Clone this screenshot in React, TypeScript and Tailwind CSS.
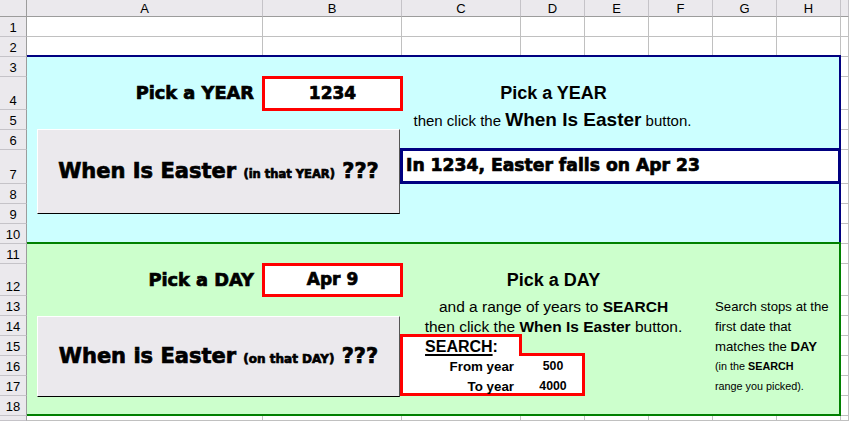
import React from "react";

const heavy = "font-['DejaVu_Sans',sans-serif] font-bold [-webkit-text-stroke:0.7px_#000]";
const reg = "font-['Liberation_Sans',Arial,sans-serif]";
const tpl =
  "grid grid-cols-[27px_236px_139px_119px_64px_64px_64px_64px_64px_1fr] grid-rows-[17px_20px_20px_20px_33px_20px_20px_34px_20px_20px_20px_20px_32px_20px_20px_20px_20px_20px_20px_1fr]";

const letters = ["A", "B", "C", "D", "E", "F", "G", "H", ""];

function Background() {
  const cells: React.ReactNode[] = [];
  cells.push(
    <div key="corner" className="bg-[#ebe9ed] border-r border-b border-[#9c9c9c]" />
  );
  letters.forEach((l, i) =>
    cells.push(
      <div
        key={"h" + i}
        className="bg-[#ebe9ed] border-r border-r-[#c5c3c8] border-b border-b-[#9c9c9c] flex items-center justify-center pt-[1px] text-[13px] leading-none text-black overflow-hidden"
      >
        {l}
      </div>
    )
  );
  for (let r = 1; r <= 19; r++) {
    cells.push(
      <div
        key={"r" + r}
        className="bg-[#ebe9ed] border-r border-r-[#9c9c9c] border-b border-b-[#c5c3c8] flex items-end justify-center pb-[2px] text-[13px] leading-none text-black overflow-hidden"
      >
        {r < 19 ? r : ""}
      </div>
    );
    for (let c = 0; c < 9; c++)
      cells.push(<div key={r + "-" + c} className="bg-white border-r border-b border-[#c0c0c0]" />);
  }
  return <div className={`${tpl} [grid-area:1/1] ${reg}`}>{cells}</div>;
}

function Overlay() {
  return (
    <div className={`${tpl} [grid-area:1/1] ${reg} text-black`}>
      {/* regions */}
      <div className="col-start-2 col-end-10 row-start-4 row-end-12 -mt-[2px] bg-[#ccffff] border-t-2 border-r-2 border-[#000080]" />
      <div className="col-start-2 col-end-10 row-start-12 row-end-20 -mt-[2px] bg-[#ccffcc] border-t-2 border-r-2 border-b-2 border-[#008000]" />

      {/* YEAR section */}
      <div className="col-start-2 row-start-5 flex items-center justify-end pr-[9px]">
        <span className={`${heavy} text-[17.8px] whitespace-nowrap`}>Pick a YEAR</span>
      </div>
      <div className="col-start-3 row-start-5 -m-[1px] bg-white border-[3px] border-[#ff0000] flex items-center justify-center">
        <span className={`${heavy} text-[17px]`}>1234</span>
      </div>
      <div className="col-start-4 col-end-8 row-start-5 flex items-center justify-center pr-[8px]">
        <span className="font-bold text-[18px] whitespace-nowrap">Pick a YEAR</span>
      </div>
      <div className="col-start-4 col-end-8 row-start-6 flex items-center justify-center pr-[10px]">
        <span className="text-[15px] whitespace-nowrap">
          then click the <b className="text-[19px]">When Is Easter</b> button.
        </span>
      </div>
      <div className="col-start-4 col-end-10 row-start-8 -ml-[2px] -mt-[2px] bg-white border-[3px] border-[#000080] flex items-center pl-[3px]">
        <span className={`${heavy} text-[17.2px] whitespace-nowrap`}>In 1234, Easter falls on Apr 23</span>
      </div>

      {/* DAY section */}
      <div className="col-start-2 row-start-13 flex items-center justify-end pr-[9px]">
        <span className={`${heavy} text-[17.8px] whitespace-nowrap`}>Pick a DAY</span>
      </div>
      <div className="col-start-3 row-start-13 -m-[1px] bg-white border-[3px] border-[#ff0000] flex items-center justify-center">
        <span className={`${heavy} text-[17px]`}>Apr 9</span>
      </div>
      <div className="col-start-4 col-end-8 row-start-13 flex items-center justify-center pr-[8px]">
        <span className="font-bold text-[18px] whitespace-nowrap">Pick a DAY</span>
      </div>
      <div className="col-start-4 col-end-8 row-start-14 flex items-center justify-center pr-[8px] pt-[1px]">
        <span className="text-[15.5px] whitespace-nowrap">
          and a range of years to <b>SEARCH</b>
        </span>
      </div>
      <div className="col-start-4 col-end-8 row-start-15 flex items-center justify-center pr-[8px] pt-[1px]">
        <span className="text-[15.5px] whitespace-nowrap">
          then click the <b>When Is Easter</b> button.
        </span>
      </div>

      {/* search box */}
      <div className="col-start-4 row-start-16 -ml-[2px] -mt-[2px] -mr-[1px] bg-white border-t-[3px] border-l-[3px] border-r-[3px] border-[#ff0000]" />
      <div className="col-start-4 col-end-6 row-start-17 row-end-19 -ml-[2px] bg-white border-l-[3px] border-r-[3px] border-b-[3px] border-[#ff0000]" />
      <div className="col-start-5 row-start-17 self-start -ml-[1px] -mt-[3px] h-[3px] bg-[#ff0000]" />
      <div className="col-start-4 row-start-16 flex items-center justify-center pt-[1px]">
        <span className="font-bold text-[16px] whitespace-nowrap">
          <u className="decoration-[1.5px] underline-offset-[2px]">SEARCH</u>:
        </span>
      </div>
      <div className="col-start-4 row-start-17 flex items-center justify-end pr-[7px] pt-[2px]">
        <span className="font-bold text-[13.33px] whitespace-nowrap">From year</span>
      </div>
      <div className="col-start-5 row-start-17 flex items-center justify-center">
        <span className="font-bold text-[12.3px]">500</span>
      </div>
      <div className="col-start-4 row-start-18 flex items-center justify-end pr-[7px] pt-[1px]">
        <span className="font-bold text-[13.33px] whitespace-nowrap">To year</span>
      </div>
      <div className="col-start-5 row-start-18 flex items-center justify-center">
        <span className="font-bold text-[12.3px]">4000</span>
      </div>

      {/* right notes */}
      <div className="col-start-8 col-end-10 row-start-14 flex items-center pl-[2px] pt-[1px]">
        <span className="text-[13.2px] whitespace-nowrap">Search stops at the</span>
      </div>
      <div className="col-start-8 col-end-10 row-start-15 flex items-center pl-[2px] pt-[1px]">
        <span className="text-[13.2px] whitespace-nowrap">first date that</span>
      </div>
      <div className="col-start-8 col-end-10 row-start-16 flex items-center pl-[2px] pt-[1px]">
        <span className="text-[13.2px] whitespace-nowrap">
          matches the <b>DAY</b>
        </span>
      </div>
      <div className="col-start-8 col-end-10 row-start-17 flex items-center pl-[2px] pt-[1px]">
        <span className="text-[10.8px] whitespace-nowrap">
          (in the <b>SEARCH</b>
        </span>
      </div>
      <div className="col-start-8 col-end-10 row-start-18 flex items-center pl-[2px] pt-[1px]">
        <span className="text-[10.8px] whitespace-nowrap">range you picked).</span>
      </div>

      {/* buttons */}
      <div className="col-start-2 col-end-4 row-start-7 row-end-11 self-start ml-[10px] -mt-[1px] w-[363px] h-[85px] flex items-center justify-center bg-[#ebe9ed] border border-t-white border-l-white border-r-[#555555] border-b-black">
        <span className={`${heavy} text-[21px] whitespace-nowrap`}>
          When Is Easter <span className="text-[11.5px]">(in that YEAR)</span> ???
        </span>
      </div>
      <div className="col-start-2 col-end-4 row-start-15 row-end-19 self-start ml-[10px] w-[363px] h-[81px] flex items-center justify-center bg-[#ebe9ed] border border-t-white border-l-white border-r-[#555555] border-b-black">
        <span className={`${heavy} text-[21px] whitespace-nowrap`}>
          When is Easter <span className="text-[12px]">(on that DAY)</span> ???
        </span>
      </div>
    </div>
  );
}

export default function App() {
  return (
    <div className="w-[849px] h-[421px] overflow-hidden bg-white grid">
      <Background />
      <Overlay />
    </div>
  );
}
